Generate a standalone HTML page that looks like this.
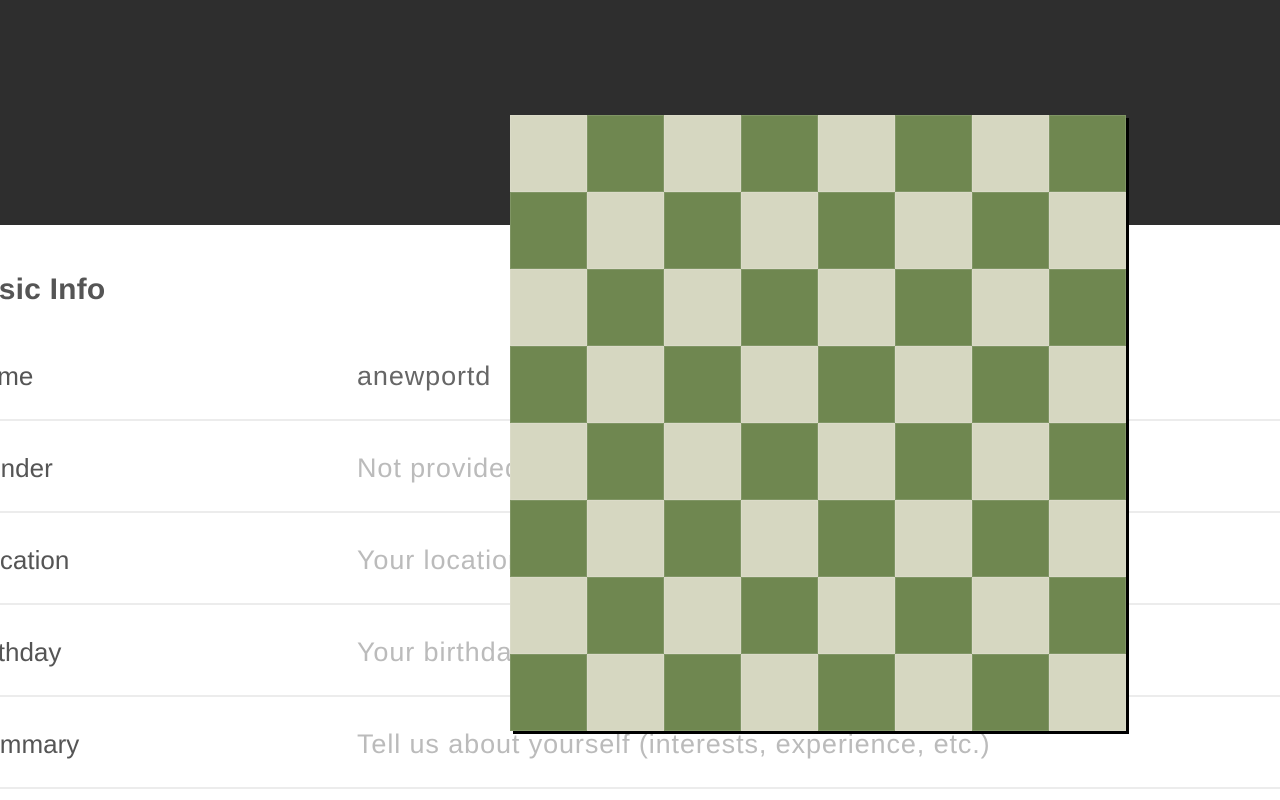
<!DOCTYPE html>
<html><head><style>
body{margin:0;width:1280px;height:800px;overflow:hidden;background:#fff;font-family:"Liberation Sans",sans-serif;position:relative}
.hdr{position:absolute;left:0;top:0;width:1280px;height:225px;background:#2e2e2e}
.t{position:absolute;white-space:nowrap;font-size:27px;line-height:30px;letter-spacing:0.9px}
.l{color:#555;font-size:26px;letter-spacing:0}
.v{color:#666;left:357px}
.p{color:#bbb;left:357px}
.line{position:absolute;left:0;width:1280px;height:2px;background:#ececec}
.board{position:absolute;left:510px;top:115px;width:616px;height:616px;display:grid;grid-template-columns:repeat(8,77px);grid-template-rows:repeat(8,77px);box-shadow:3px 3px 0 #000}
.board div{box-sizing:border-box;border:1px solid rgba(255,255,255,0.12)}
.a{background:#d6d7c1}.b{background:#6f8750}
</style></head><body>
<div class="hdr"></div>
<div class="t l" style="left:-40px;top:273px;font-size:30px;font-weight:bold;color:#555;line-height:34px;letter-spacing:0.2px">Basic Info</div>
<div class="t l" style="left:-36px;top:361px">Name</div>
<div class="t v" style="top:361px">anewportd</div>
<div class="line" style="top:419px"></div>
<div class="t l" style="left:-34px;top:453px">Gender</div>
<div class="t p" style="top:453px">Not provided</div>
<div class="line" style="top:511px"></div>
<div class="t l" style="left:-29px;top:545px">Location</div>
<div class="t p" style="top:545px">Your location</div>
<div class="line" style="top:603px"></div>
<div class="t l" style="left:-34px;top:637px">Birthday</div>
<div class="t p" style="top:637px">Your birthday</div>
<div class="line" style="top:695px"></div>
<div class="t l" style="left:-32px;top:729px">Summary</div>
<div class="t p" style="top:729px">Tell us about yourself (interests, experience, etc.)</div>
<div class="line" style="top:787px"></div>
<div class="board">
<div class="a"></div><div class="b"></div><div class="a"></div><div class="b"></div><div class="a"></div><div class="b"></div><div class="a"></div><div class="b"></div>
<div class="b"></div><div class="a"></div><div class="b"></div><div class="a"></div><div class="b"></div><div class="a"></div><div class="b"></div><div class="a"></div>
<div class="a"></div><div class="b"></div><div class="a"></div><div class="b"></div><div class="a"></div><div class="b"></div><div class="a"></div><div class="b"></div>
<div class="b"></div><div class="a"></div><div class="b"></div><div class="a"></div><div class="b"></div><div class="a"></div><div class="b"></div><div class="a"></div>
<div class="a"></div><div class="b"></div><div class="a"></div><div class="b"></div><div class="a"></div><div class="b"></div><div class="a"></div><div class="b"></div>
<div class="b"></div><div class="a"></div><div class="b"></div><div class="a"></div><div class="b"></div><div class="a"></div><div class="b"></div><div class="a"></div>
<div class="a"></div><div class="b"></div><div class="a"></div><div class="b"></div><div class="a"></div><div class="b"></div><div class="a"></div><div class="b"></div>
<div class="b"></div><div class="a"></div><div class="b"></div><div class="a"></div><div class="b"></div><div class="a"></div><div class="b"></div><div class="a"></div>
</div>
</body></html>
